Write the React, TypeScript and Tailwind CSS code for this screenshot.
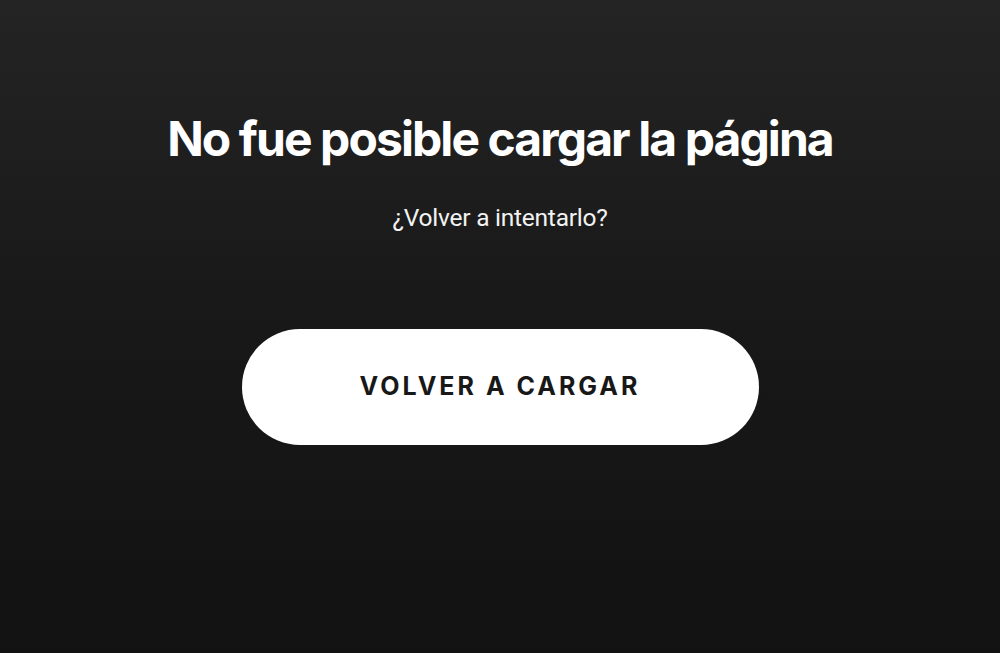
export default function App() {
  return (
    <div
      className="flex h-[653px] w-full flex-col items-center bg-gradient-to-b from-[#242424] via-[#181818] to-[#121212] text-white"
      style={{ fontFamily: "Inter, 'Liberation Sans', sans-serif" }}
    >
      <h1 className="mt-[109px] text-[48px] font-bold leading-[60px] tracking-[-0.04em]">
        No fue posible cargar la página
      </h1>
      <p
        className="mt-[33px] text-[24.5px] leading-[31px] tracking-[-0.01em] text-[#f2f2f2]"
        style={{ fontFamily: "Roboto, 'Liberation Sans', sans-serif" }}
      >
        ¿Volver a intentarlo?
      </p>
      <button className="mt-[96px] flex h-[116px] w-[517px] items-center justify-center rounded-full bg-white text-[25px] font-bold tracking-[0.12em] text-[#181818]">
        VOLVER A CARGAR
      </button>
    </div>
  );
}
